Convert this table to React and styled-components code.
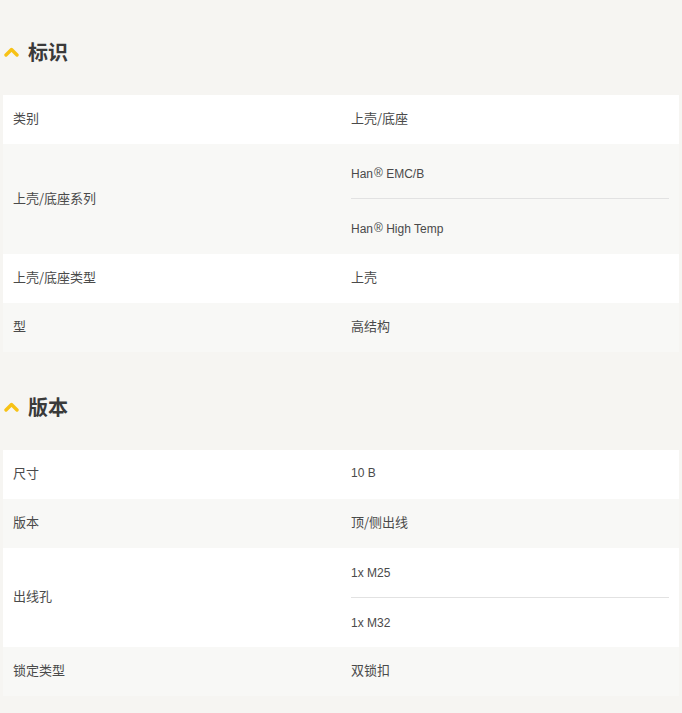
import React from "react";
import styled, { createGlobalStyle } from "styled-components";

const GlobalStyle = createGlobalStyle`
  html, body {
    margin: 0;
    padding: 0;
    background: #f6f5f2;
  }
  body {
    font-family: "Liberation Sans", "Noto Sans CJK SC", sans-serif;
    color: #4a4a4a;
  }
`;

const Page = styled.div`
  padding: 0 3px 17px;
`;

const Section = styled.section`
  padding-top: ${(p) => (p.first ? "36px" : "39px")};
`;

const Heading = styled.h2`
  display: flex;
  align-items: center;
  gap: 9px;
  margin: 0 0 29px;
  padding-left: 1px;
  height: 30px;
  font-family: "Noto Sans CJK SC", sans-serif;
  font-size: 20px;
  font-weight: 700;
  color: #3a3a3a;
`;

const Table = styled.div`
  display: flex;
  flex-direction: column;
`;

const Row = styled.div`
  display: grid;
  grid-template-columns: 1fr 1fr;
  background: ${(p) => (p.alt ? "#f8f8f6" : "#ffffff")};
`;

const Cell = styled.div`
  display: flex;
  align-items: center;
  padding: 0 10px 4px;
  min-height: 45px;
  font-family: "Noto Sans CJK SC", sans-serif;
  font-size: 13px;
  color: #4a4a4a;
`;

const Values = styled.div`
  display: flex;
  flex-direction: column;
  padding: 0 10px;
`;

const SubValue = styled.div`
  display: flex;
  align-items: center;
  box-sizing: border-box;
  height: ${(p) => p.h}px;
  padding-top: ${(p) => p.shift || 0}px;
  font-family: "Liberation Sans", "Noto Sans CJK SC", sans-serif;
  font-size: 12px;
  color: #4a4a4a;
  & + & {
    border-top: 1px solid #e2e2e2;
  }
`;

const Latin = styled.span`
  font-family: "Liberation Sans", sans-serif;
  font-size: 12px;
`;

const Reg = styled.sup`
  font-size: 12px;
  line-height: 0;
  margin-left: 1px;
  position: relative;
  top: -1px;
`;

const Chevron = () => (
  <svg width="15" height="11" viewBox="0 0 15 11">
    <polyline
      points="2,9 7.5,3.5 13,9"
      fill="none"
      stroke="#f7c216"
      strokeWidth="3.4"
      strokeLinecap="round"
      strokeLinejoin="round"
    />
  </svg>
);

const Han = ({ children }) => (
  <>
    Han<Reg>®</Reg>&nbsp;{children}
  </>
);

const sections = [
  {
    title: "标识",
    rows: [
      { label: "类别", value: "上壳/底座" },
      {
        label: "上壳/底座系列",
        values: [<Han key="a">EMC/B</Han>, <Han key="b">High Temp</Han>],
        h: [54, 56],
        shift: 5,
      },
      { label: "上壳/底座类型", value: "上壳" },
      { label: "型", value: "高结构" },
    ],
  },
  {
    title: "版本",
    rows: [
      { label: "尺寸", value: <Latin>10 B</Latin> },
      { label: "版本", value: "顶/侧出线" },
      { label: "出线孔", values: ["1x M25", "1x M32"], h: [49, 50] },
      { label: "锁定类型", value: "双锁扣" },
    ],
  },
];

export default function App() {
  return (
    <>
      <GlobalStyle />
      <Page>
        {sections.map((s, si) => (
          <Section key={s.title} first={si === 0}>
            <Heading>
              <Chevron />
              {s.title}
            </Heading>
            <Table>
              {s.rows.map((r, i) => (
                <Row key={r.label} alt={i % 2 === 1}>
                  <Cell>{r.label}</Cell>
                  {r.values ? (
                    <Values>
                      {r.values.map((v, j) => (
                        <SubValue key={j} h={r.h[j]} shift={r.shift}>
                          {v}
                        </SubValue>
                      ))}
                    </Values>
                  ) : (
                    <Cell>{r.value}</Cell>
                  )}
                </Row>
              ))}
            </Table>
          </Section>
        ))}
      </Page>
    </>
  );
}
